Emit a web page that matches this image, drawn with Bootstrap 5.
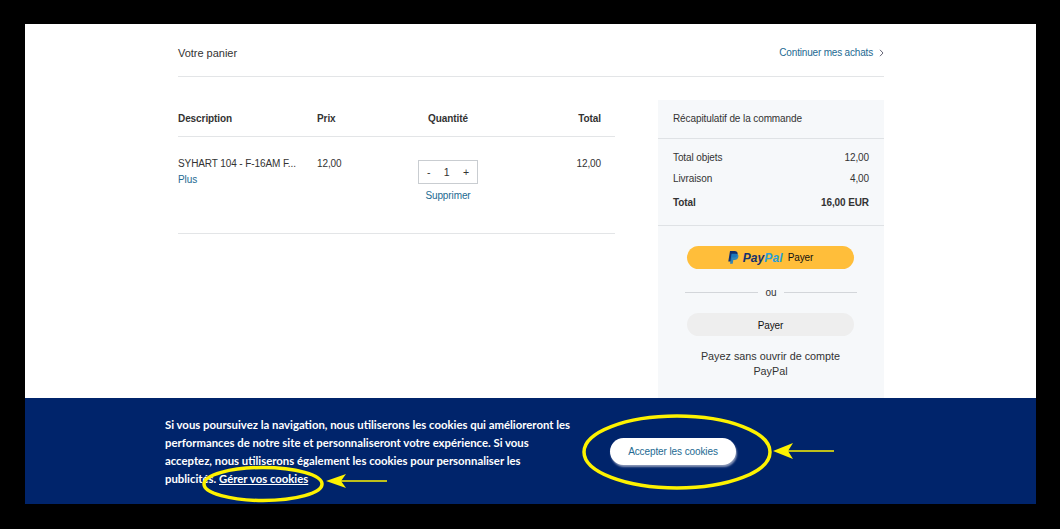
<!DOCTYPE html>
<html lang="fr">
  <head>
    <meta charset="utf-8" />
    <title>Votre panier</title>
    <link href="https://cdn.jsdelivr.net/npm/bootstrap@5.3.0/dist/css/bootstrap.min.css" rel="stylesheet" />
    <style>
      body { background: #000; font-family: "Liberation Sans", Arial, sans-serif; font-size: 10px; letter-spacing: -.1px; color: #333; }
      a { color: #236a92; text-decoration: none; }
      .shot-frame { position: relative; width: 1011px; height: 480px; margin: 24px 0 0 25px; background: #fff; overflow: hidden; }
      .cart-wrap { width: 706px; margin-left: 153px; }
      .cart-head { height: 53px; border-bottom: 1px solid #e3e5e7; font-size: 11px; letter-spacing: -.02px; padding-bottom: 15px; }
      .cart-more { font-size: 10px; letter-spacing: -.18px; line-height: 16px; gap: 6px; }
      .cart-body { padding-top: 23px; }
      .cart-left { width: 437px; }
      .cart-row { display: grid; grid-template-columns: 139px 79px 104px 101px 14px; }
      .cart-titles { height: 37px; border-bottom: 1px solid #e3e5e7; font-weight: 700; align-items: center; letter-spacing: -.08px; }
      .cart-line { height: 97px; border-bottom: 1px solid #e3e5e7; padding-top: 20px; line-height: 13px; }
      .cart-name { line-height: 13px; margin-bottom: 3px; }
      .qty-box { width: 60px; height: 24px; border: 1px solid #c9cdd1; margin: 3px auto 5px; padding: 0 8px; font-size: 10.5px; }
      .cart-side { width: 226px; background: #f6f8fa; height: 320px; }
      .side-title { height: 39px; border-bottom: 1px solid #dfe2e5; padding: 0 0 1px 15px; }
      .side-sums { height: 87px; border-bottom: 1px solid #dfe2e5; padding: 8px 15px 0; }
      .sum-row { height: 21px; }
      .sum-total { font-weight: 700; margin-top: 3px; }
      .side-pay { padding: 20px 30px 0 29px; }
      .pay-pill { height: 23px; border-radius: 12px; color: #111; }
      .pay-yellow { background: #ffbe3a; }
      .pay-grey { background: #eeeeee; padding-top: 1px; }
      .pay-logo { font-weight: 700; font-style: italic; font-size: 12px; letter-spacing: .1px; margin: 0 5px 0 4px; }
      .logo-dark { color: #14306e; }
      .logo-light { color: #2a9fd6; }
      .pay-or { height: 44px; margin: 0 -3px 0 -2px; padding-top: 2px; }
      .pay-or hr { flex: 1; margin: 0; border: 0; border-top: 1px solid #d3d6da; opacity: 1; }
      .pay-note { font-size: 10.8px; letter-spacing: 0; line-height: 15px; margin-top: 12px; padding-top: 1px; }
      .cookie-bar { position: absolute; left: 0; right: 0; bottom: 0; height: 106px; background: #00246b; padding-left: 140px; padding-top: 2px; }
      .cookie-text { width: 407px; color: #fff; font-family: "Lato", "Open Sans", sans-serif; font-weight: 700; font-size: 11.35px; letter-spacing: 0; line-height: 18px; margin: 0; }
      .cookie-text a { color: #fff; text-decoration: underline; }
      .cookie-btn { width: 126px; height: 27px; margin-left: 38px; margin-top: -2px; border-radius: 14px; background: #fff; border: 0; color: #236a92; font-size: 10px; letter-spacing: -.1px; box-shadow: 1px 2px 2px #8b98b8; padding: 0; }
      .mark-layer { position: absolute; inset: 0; width: 1011px; height: 480px; pointer-events: none; }
    </style>
  </head>
  <body>
    <div class="shot-frame">
      <div class="cart-wrap">
        <div class="cart-head d-flex justify-content-between align-items-end">
          <span>Votre panier</span>
          <a href="#" class="cart-more d-flex align-items-center">Continuer mes achats
            <svg width="5" height="8" viewBox="0 0 5 8"><path d="M1 .8 4 4 1 7.2" fill="none" stroke="#667" stroke-width="1"/></svg>
          </a>
        </div>
        <div class="cart-body d-flex justify-content-between">
          <div class="cart-left">
            <div class="cart-row cart-titles">
              <span>Description</span>
              <span>Prix</span>
              <span class="text-center">Quantité</span>
              <span class="text-end">Total</span>
            </div>
            <div class="cart-row cart-line">
              <div>
                <div class="cart-name">SYHART 104 - F-16AM F...</div>
                <a href="#">Plus</a>
              </div>
              <div>12,00</div>
              <div class="text-center">
                <div class="qty-box d-flex justify-content-between align-items-center">
                  <span>-</span><span>1</span><span>+</span>
                </div>
                <a href="#">Supprimer</a>
              </div>
              <div class="text-end">12,00</div>
            </div>
          </div>
          <aside class="cart-side">
            <div class="side-title d-flex align-items-center">Récapitulatif de la commande</div>
            <div class="side-sums">
              <div class="sum-row d-flex justify-content-between align-items-center"><span>Total objets</span><span>12,00</span></div>
              <div class="sum-row d-flex justify-content-between align-items-center"><span>Livraison</span><span>4,00</span></div>
              <div class="sum-row sum-total d-flex justify-content-between align-items-center"><span>Total</span><span>16,00 EUR</span></div>
            </div>
            <div class="side-pay">
              <div class="pay-pill pay-yellow d-flex justify-content-center align-items-center">
                <svg width="11" height="13" viewBox="0 0 11 13">
                  <path d="M2 0h4.500C9 0 10 1.300 9.500 3.400 9 5.600 7.500 6.600 5.400 6.600H4L3.300 10.500H.3Z" fill="#14306e"/>
                  <path d="M3.500 2.700h4.200c2.200.2 3 1.300 2.600 3.200-.4 2-1.800 3-3.800 3H5.300L4.700 12.700H2Z" fill="#1f7fc4" opacity=".9"/>
                </svg>
                <span class="pay-logo"><span class="logo-dark">Pay</span><span class="logo-light">Pal</span></span>
                <span>Payer</span>
              </div>
              <div class="pay-or d-flex align-items-center gap-2"><hr /><span>ou</span><hr /></div>
              <div class="pay-pill pay-grey d-flex justify-content-center align-items-center">Payer</div>
              <div class="pay-note text-center">Payez sans ouvrir de compte PayPal</div>
            </div>
          </aside>
        </div>
      </div>
      <div class="cookie-bar d-flex align-items-center">
        <p class="cookie-text">Si vous poursuivez la navigation, nous utiliserons les cookies qui amélioreront les performances de notre site et personnaliseront votre expérience. Si vous acceptez, nous utiliserons également les cookies pour personnaliser les publicités. <a href="#">Gérer vos cookies</a></p>
        <button type="button" class="cookie-btn">Accepter les cookies</button>
      </div>
      <svg class="mark-layer" viewBox="0 0 1011 480">
        <g fill="none" stroke="#fdf200">
          <ellipse cx="238" cy="460" rx="59" ry="16.500" stroke-width="3.500"/>
          <ellipse cx="652" cy="428" rx="93" ry="36" stroke-width="3.500"/>
          <path d="M310 457h52M757 427h52" stroke-width="1.500"/>
        </g>
        <path d="M301 457l20-7-5 7 5 7ZM748 427l20-8-5 8 5 8Z" fill="#fdf200"/>
      </svg>
    </div>
    <script src="https://cdn.jsdelivr.net/npm/bootstrap@5.3.0/dist/js/bootstrap.bundle.min.js"></script>
  </body>
</html>
